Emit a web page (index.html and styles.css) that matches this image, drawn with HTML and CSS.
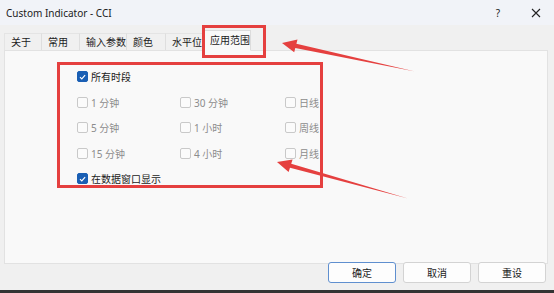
FILE: index.html
```html
<!DOCTYPE html>
<html lang="zh">
<head>
<meta charset="utf-8">
<title>Custom Indicator - CCI</title>
<link rel="stylesheet" href="styles.css">
</head>
<body>
<div class="window">
  <div class="titlebar">
    <span class="title">Custom Indicator - CCI</span>
    <span class="tb-btn help">?</span>
    <span class="tb-btn close">
      <svg width="10" height="10" viewBox="0 0 10 10"><path d="M1 1 L9 9 M9 1 L1 9" stroke="#222" stroke-width="1.1" fill="none"/></svg>
    </span>
  </div>
  <div class="tabs">
    <div class="tab t1">关于</div>
    <div class="tab t2">常用</div>
    <div class="tab t3">输入参数</div>
    <div class="tab t4">颜色</div>
    <div class="tab t5">水平位</div>
    <div class="tab t6 active">应用范围</div>
  </div>
  <div class="panel">
    <div class="grid">
      <label class="cb full on"><span class="box"><svg width="10" height="10" viewBox="0 0 10 10"><path d="M2.2 5.2 L4.2 7.1 L7.9 2.9" stroke="#fff" stroke-width="1.3" fill="none"/></svg></span>所有时段</label>
      <label class="cb off"><span class="box"></span>1 分钟</label>
      <label class="cb off"><span class="box"></span>30 分钟</label>
      <label class="cb off"><span class="box"></span>日线</label>
      <label class="cb off"><span class="box"></span>5 分钟</label>
      <label class="cb off"><span class="box"></span>1 小时</label>
      <label class="cb off"><span class="box"></span>周线</label>
      <label class="cb off"><span class="box"></span>15 分钟</label>
      <label class="cb off"><span class="box"></span>4 小时</label>
      <label class="cb off"><span class="box"></span>月线</label>
      <label class="cb full on"><span class="box"><svg width="10" height="10" viewBox="0 0 10 10"><path d="M2.2 5.2 L4.2 7.1 L7.9 2.9" stroke="#fff" stroke-width="1.3" fill="none"/></svg></span>在数据窗口显示</label>
    </div>
  </div>
  <div class="buttons">
    <button class="btn primary">确定</button>
    <button class="btn">取消</button>
    <button class="btn">重设</button>
  </div>
</div>
<div class="bottom-edge"></div>
<svg class="annot" width="554" height="293" viewBox="0 0 554 293">
  <rect x="203.5" y="26.5" width="61" height="30" fill="none" stroke="#e5403f" stroke-width="3"/>
  <rect x="58.5" y="63.5" width="263" height="123" fill="none" stroke="#e5403f" stroke-width="3"/>
  <polygon points="282,43 297.5,39.6 296.4,43.7 415,71.5 295.3,48.1 294.2,52.3" fill="#e5403f"/>
  <polygon points="277,162 292.6,159.6 291.2,163.7 408,198.5 290,167.8 288.6,172" fill="#e5403f"/>
</svg>
</body>
</html>
```

FILE: styles.css
```css
* { box-sizing: border-box; }
html, body {
  margin: 0;
  padding: 0;
}
body {
  width: 554px;
  height: 293px;
  position: relative;
  overflow: hidden;
  background: #f0f0f0;
  font-family: "Noto Sans", "Noto Sans CJK SC", sans-serif;
  font-size: 10px;
  color: #1b1b1b;
}
.window {
  width: 554px;
  height: 290px;
  display: flex;
  flex-direction: column;
  background: #f0f0f0;
}
.titlebar {
  height: 25px;
  background: #f1f3f8;
  display: flex;
  align-items: center;
  padding-left: 6px;
}
.title {
  flex: 1;
  font-size: 10px;
  color: #1b1b1b;
}
.tb-btn {
  display: flex;
  align-items: center;
  justify-content: center;
}
.help {
  width: 12px;
  margin-right: 26px;
  font-size: 10px;
}
.close {
  width: 12px;
  margin-right: 12px;
}
.tabs {
  height: 25px;
  display: flex;
  align-items: flex-end;
  padding-left: 4px;
  position: relative;
  z-index: 2;
}
.tab {
  height: 17px;
  padding-left: 6px;
  line-height: 16px;
  white-space: nowrap;
  overflow: visible;
  font-family: "Noto Sans CJK SC", sans-serif;
  font-size: 10px;
  color: #1b1b1b;
  border-right: 1px solid #dedede;
  border-top: 1px solid #e4e4e4;
  background: #f0f0f0;
}
.t1 { width: 38px; border-left: 1px solid #e4e4e4; }
.t2 { width: 38px; }
.t3 { width: 47px; }
.t4 { width: 39px; }
.t5 { width: 38px; border-right: none; }
.t6 { width: 47px; }
.tab.active {
  height: 21px;
  line-height: 18px;
  padding-left: 5px;
  background: #f9f9f9;
  border: 1px solid #dcdcdc;
  border-bottom: 1px solid #f9f9f9;
  margin-bottom: -1px;
}
.panel {
  margin: 0 6px 0 4px;
  height: 214px;
  background: #f9f9f9;
  border: 1px solid #e2e2e2;
  padding: 13px 0 0 72px;
}
.grid {
  display: grid;
  grid-template-columns: 103px 105px 60px;
  grid-auto-rows: 25.5px;
}
.cb {
  display: flex;
  align-items: center;
  gap: 3px;
  font-family: "Noto Sans", "Noto Sans CJK SC", sans-serif;
  font-size: 10px;
  white-space: nowrap;
}
.cb.full { grid-column: 1 / -1; }
.cb.on { color: #1b1b1b; }
.cb.off { color: #8c8c8c; }
.box {
  width: 11px;
  height: 11px;
  border-radius: 2px;
  display: flex;
  align-items: center;
  justify-content: center;
}
.on .box {
  background: #1a5fb4;
  border: 1px solid #1a5fb4;
}
.off .box {
  background: #fbfbfb;
  border: 1px solid #c9c9c9;
}
.buttons {
  display: flex;
  justify-content: flex-end;
  gap: 7px;
  padding: 0 8px 0 0;
  margin-top: -2px;
}
.btn {
  width: 68px;
  height: 21px;
  background: #fdfdfd;
  border: 1px solid #d3d3d3;
  border-radius: 3px;
  font-family: "Noto Sans CJK SC", sans-serif;
  font-size: 10px;
  color: #1b1b1b;
  padding: 0;
}
.btn.primary {
  border: 1px solid #5f8fcf;
}
.bottom-edge {
  height: 3px;
  background: #333;
}
.annot {
  position: absolute;
  left: 0;
  top: 0;
  pointer-events: none;
  z-index: 5;
}
```
